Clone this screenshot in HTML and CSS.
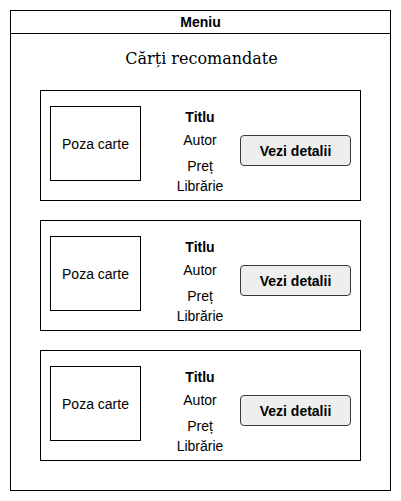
FILE: index.html
```html
<!DOCTYPE html>
<html lang="ro">
<head>
    <meta charset="UTF-8">
    <meta name="viewport" content="width=device-width, initial-scale=1.0">
    <title>Cărți recomandate</title>
    <link rel="stylesheet" href="styles.css">
</head>
<body>
    <div class="frame">
        <div class="menu">Meniu</div>
        <h1 class="heading">Cărți recomandate</h1>

        <div class="book-list">
            <div class="book-card">
                <div class="cover">Poza carte</div>
                <div class="info">
                    <div class="title">Titlu</div>
                    <div class="author">Autor</div>
                    <div class="price">Preț</div>
                    <div class="store">Librărie</div>
                </div>
                <button class="details">Vezi detalii</button>
            </div>
            <div class="book-card">
                <div class="cover">Poza carte</div>
                <div class="info">
                    <div class="title">Titlu</div>
                    <div class="author">Autor</div>
                    <div class="price">Preț</div>
                    <div class="store">Librărie</div>
                </div>
                <button class="details">Vezi detalii</button>
            </div>
            <div class="book-card">
                <div class="cover">Poza carte</div>
                <div class="info">
                    <div class="title">Titlu</div>
                    <div class="author">Autor</div>
                    <div class="price">Preț</div>
                    <div class="store">Librărie</div>
                </div>
                <button class="details">Vezi detalii</button>
            </div>
        </div>
    </div>
</body>
</html>
```

FILE: styles.css
```css
*{
    box-sizing: border-box;
    font-family: 'Liberation Sans', Arial, sans-serif;
}
body{
    margin: 0;
    padding: 0;
    background: #fff;
    color: #000;
}

.frame{
    margin: 10px;
    width: 381px;
    height: 481px;
    border: 1px solid #000;
}

.menu{
    height: 23px;
    border-bottom: 1px solid #000;
    font-size: 14px;
    font-weight: bold;
    line-height: 22px;
    text-align: center;
}

.heading{
    margin: 0;
    height: 56px;
    padding-left: 2px;
    font-family: 'DejaVu Serif', serif;
    font-weight: normal;
    font-size: 16px;
    line-height: 49px;
    text-align: center;
}

.book-list{
    display: flex;
    flex-direction: column;
    gap: 19px;
    padding-left: 29px;
}

.book-card{
    display: flex;
    align-items: flex-start;
    width: 321px;
    height: 111px;
    border: 1px solid #000;
    padding-left: 9px;
}

.cover{
    display: flex;
    align-items: center;
    justify-content: center;
    width: 91px;
    height: 75px;
    margin-top: 15px;
    border: 1px solid #000;
    font-size: 14px;
}

.info{
    width: 80px;
    margin-left: 19px;
    margin-top: 18px;
    font-size: 14px;
    line-height: 16px;
    text-align: center;
}
.title{
    font-weight: bold;
}
.author{
    margin-top: 7px;
}
.price{
    margin-top: 10px;
}
.store{
    margin-top: 4px;
}

.details{
    width: 111px;
    height: 31px;
    margin-top: 44px;
    border: 1px solid #36393d;
    border-radius: 4px;
    background-color: #eeeeee;
    font-size: 14px;
    font-weight: bold;
    color: #000;
    padding: 0;
}
```
